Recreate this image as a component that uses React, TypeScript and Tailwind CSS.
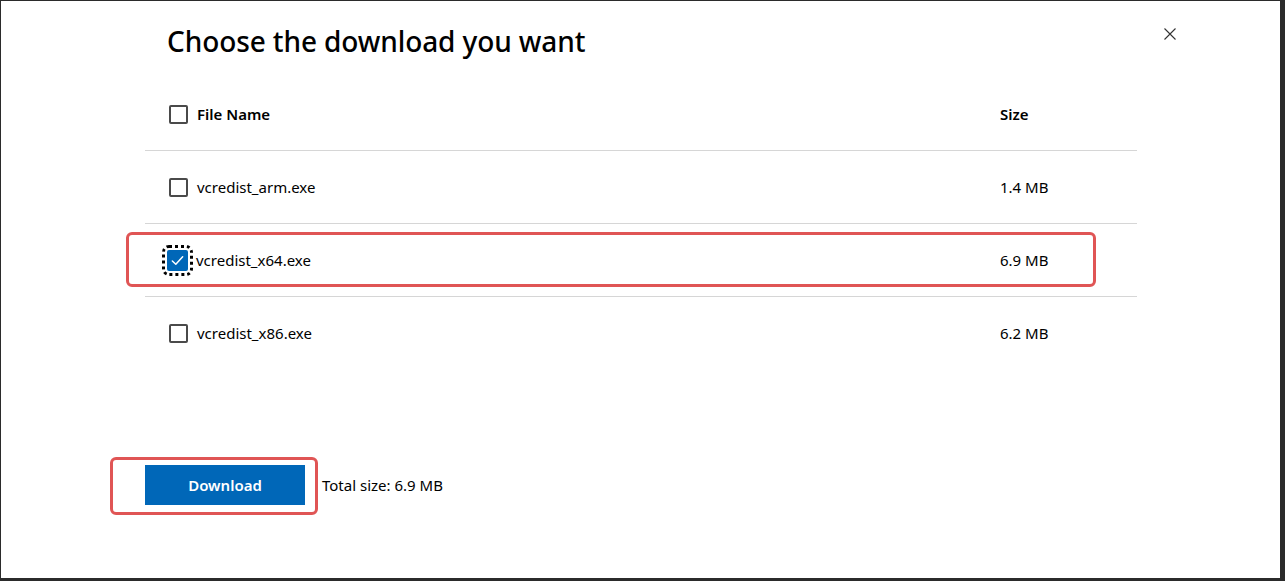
import { useState } from 'react'

const files = [
  { name: 'vcredist_arm.exe', size: '1.4 MB' },
  { name: 'vcredist_x64.exe', size: '6.9 MB' },
  { name: 'vcredist_x86.exe', size: '6.2 MB' },
]

function Checkbox({ checked, focused, onClick }: { checked: boolean; focused?: boolean; onClick?: () => void }) {
  if (checked) {
    return (
      <button
        onClick={onClick}
        className={`w-[21px] h-[21px] rounded-[2px] bg-[#0067b8] flex items-center justify-center flex-shrink-0 ${focused ? 'outline-[3px] outline-dotted outline-black outline-offset-[2px]' : ''}`}
      >
        <svg width="15" height="15" viewBox="0 0 16 16" fill="none">
          <path d="M2.5 8.5 L6.2 12 L13.5 4" stroke="white" strokeWidth="1.6" strokeLinecap="round" strokeLinejoin="round" />
        </svg>
      </button>
    )
  }
  return (
    <button onClick={onClick} className="w-[19px] h-[19px] rounded-[2px] border-2 border-[#4a4a4a] bg-white flex-shrink-0 mx-px" />
  )
}

export default function App() {
  const [selected, setSelected] = useState<Record<string, boolean>>({ 'vcredist_x64.exe': true })

  const toggle = (name: string) => setSelected(prev => ({ ...prev, [name]: !prev[name] }))

  return (
    <div className="h-[581px] bg-[#2b2b2b] pt-px pl-px pr-[5px] pb-[3px]" style={{ fontFamily: '"Noto Sans", "Open Sans", sans-serif' }}>
      <div className="relative h-full bg-white text-black pl-[144px]">
        <button className="absolute left-[1161px] top-[25px] w-[15px] h-[15px] flex items-center justify-center">
          <svg width="12" height="12" viewBox="0 0 12 12">
            <path d="M0.5 0.5 L11.5 11.5 M11.5 0.5 L0.5 11.5" stroke="#333" strokeWidth="1.1" />
          </svg>
        </button>

        <div className="w-[992px]">
          <h1 className="h-[78px] pl-[22px] pt-[20px] text-[28px] leading-[40px] font-medium tracking-[-0.1px]">
            Choose the download you want
          </h1>

          {/* Header */}
          <div className="h-[72px] flex items-center border-b border-[#d6d6d6] text-[15px] font-semibold">
            <div className="w-[855px] flex items-center pl-[23px] gap-[8px]">
              <Checkbox checked={false} />
              <span>File Name</span>
            </div>
            <span>Size</span>
          </div>

          {files.map((f, i) => (
            <div key={f.name} className={`relative h-[73px] flex items-center text-[15px] ${i < files.length - 1 ? 'border-b border-[#d6d6d6]' : ''}`}>
              {f.name === 'vcredist_x64.exe' && (
                <div className="absolute left-[-19px] right-[41px] top-[8px] bottom-[9px] rounded-[6px] border-[3px] border-[#e05555] pointer-events-none" />
              )}
              <div className={`w-[855px] flex items-center ${selected[f.name] ? 'pl-[22px] gap-[8px]' : 'pl-[23px] gap-[8px]'}`}>
                <Checkbox checked={!!selected[f.name]} focused onClick={() => toggle(f.name)} />
                <span>{f.name}</span>
              </div>
              <span>{f.size}</span>
            </div>
          ))}

          <div className="mt-[95px] flex items-center">
            <div className="relative">
              <div className="absolute left-[-35px] right-[-13px] top-[-8px] bottom-[-10px] rounded-[6px] border-[3px] border-[#e05555] pointer-events-none" />
              <button className="w-[160px] h-[40px] bg-[#0067b8] text-white text-[15px] font-semibold">Download</button>
            </div>
            <span className="ml-[17px] text-[15px]">Total size: 6.9 MB</span>
          </div>
        </div>
      </div>
    </div>
  )
}
